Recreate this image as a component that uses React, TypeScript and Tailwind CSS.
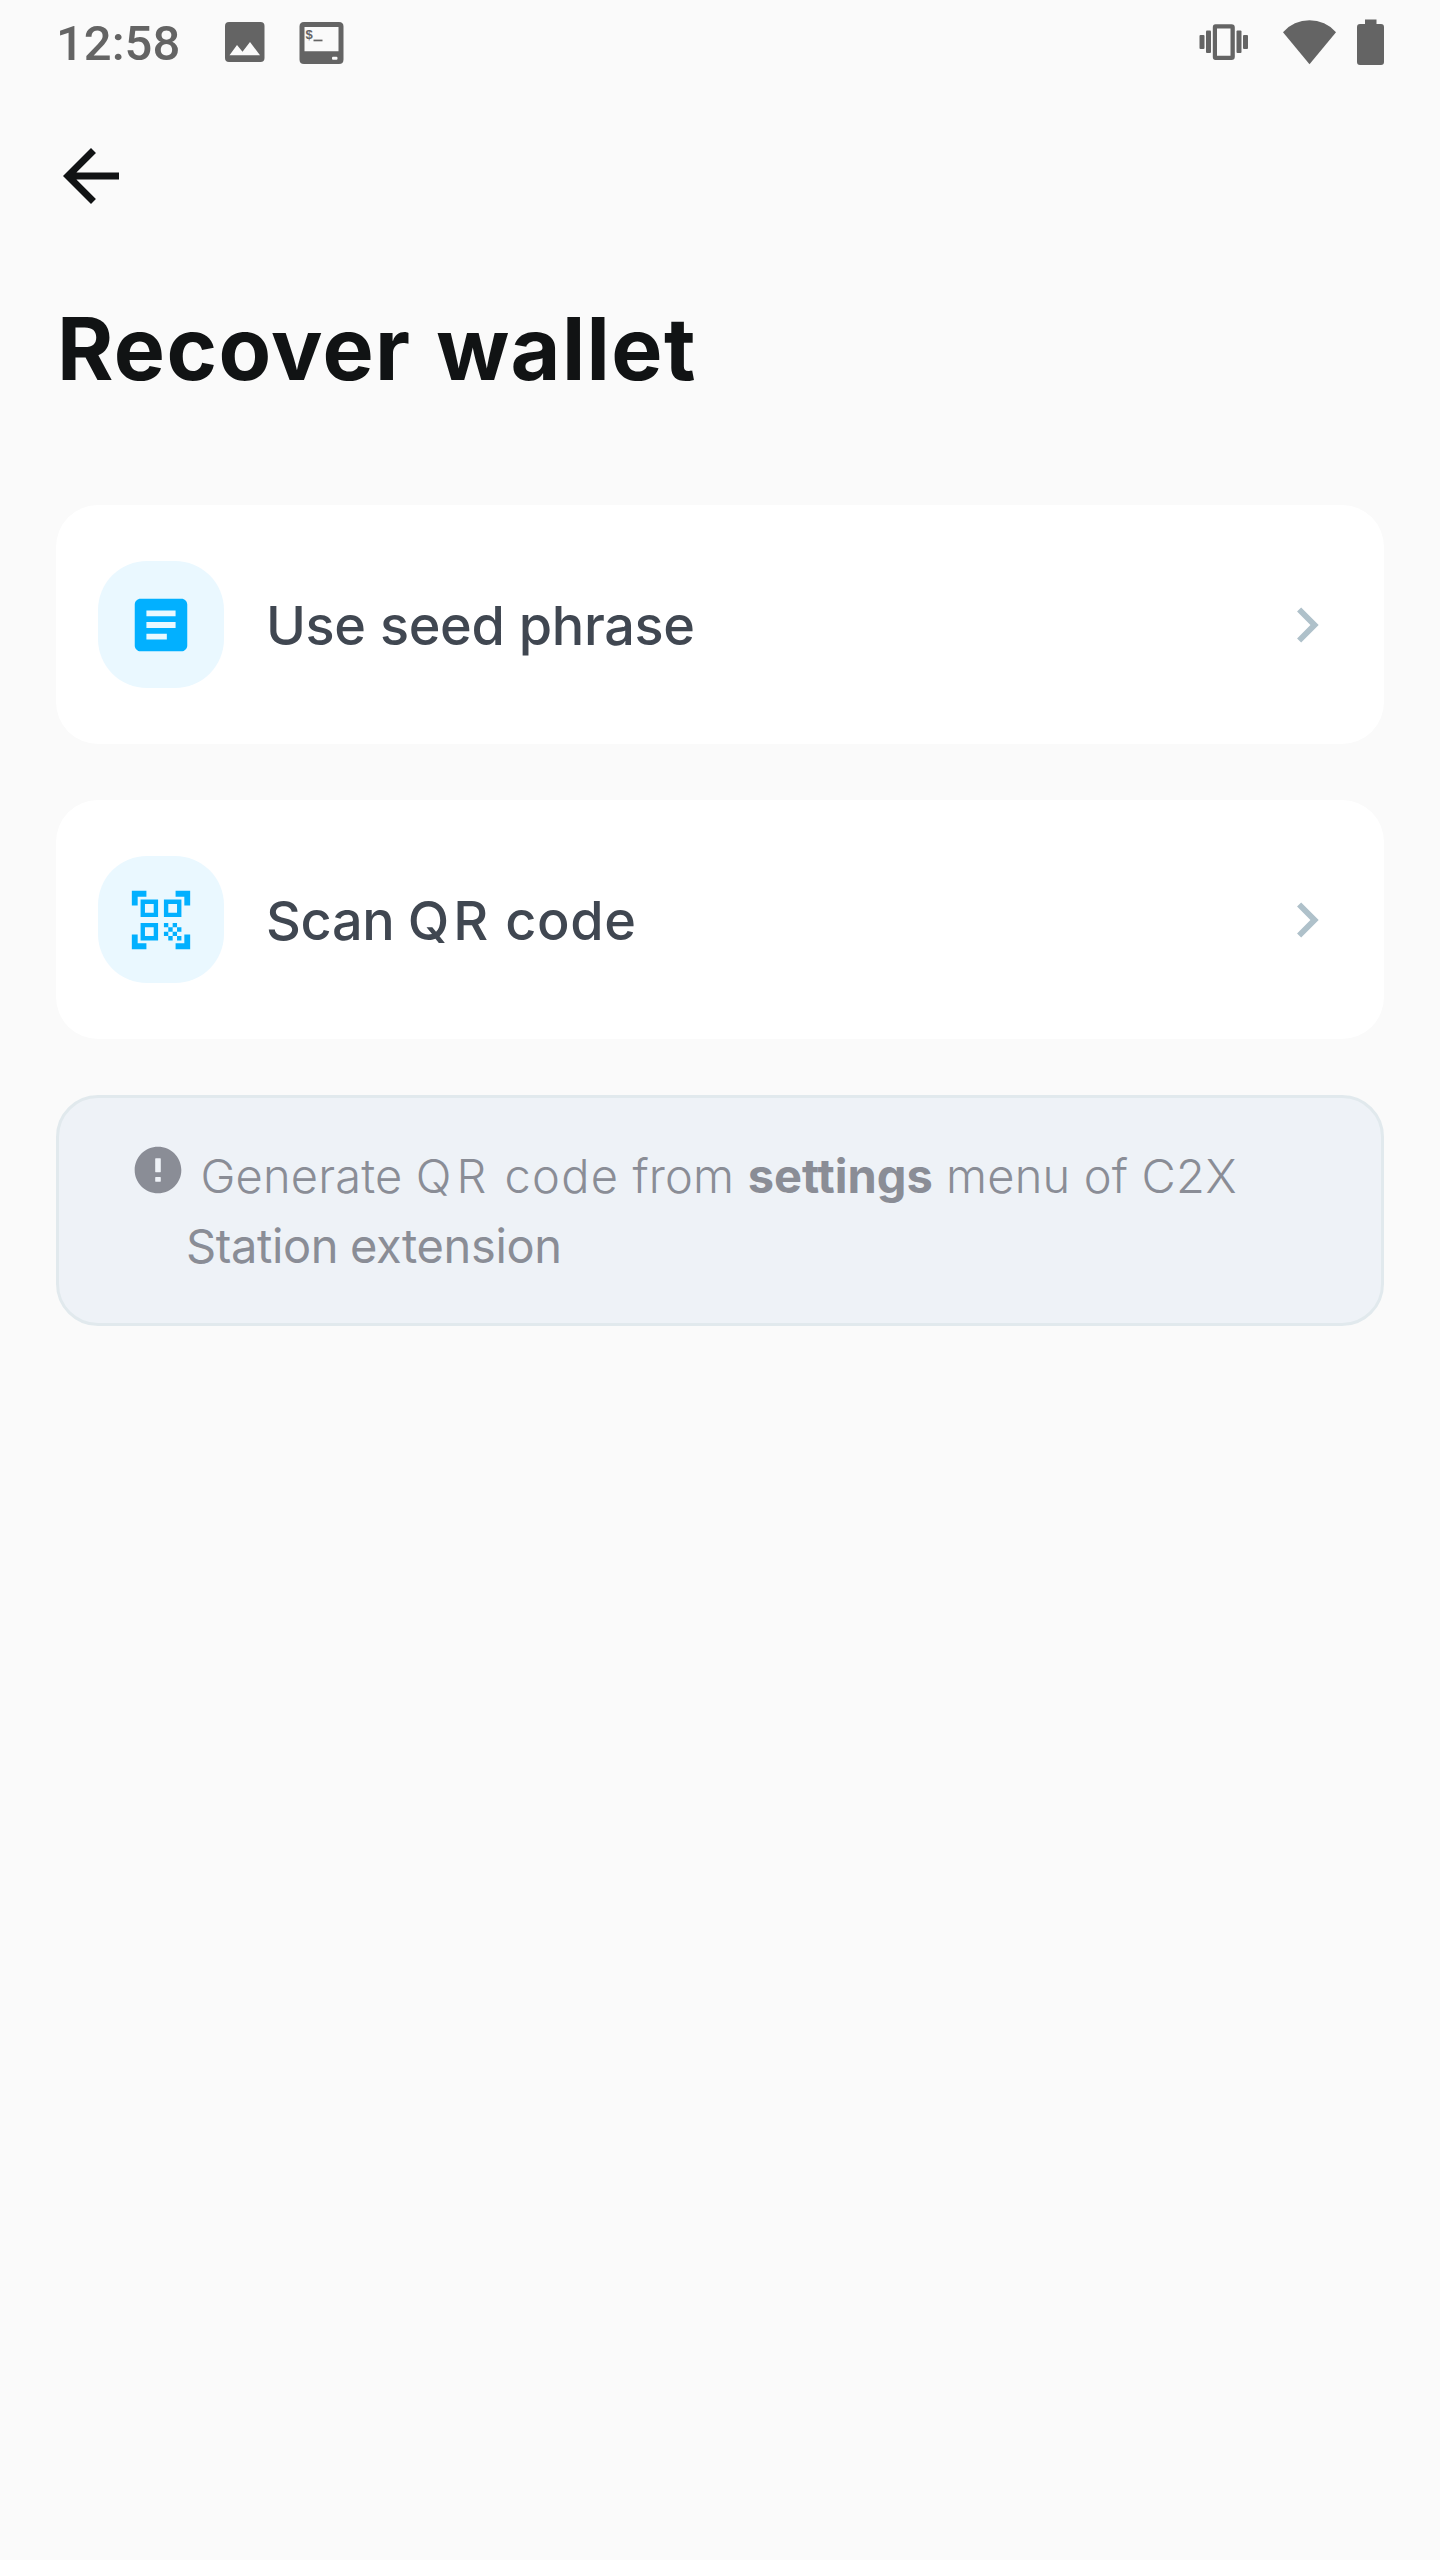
import type { ReactNode } from "react";

function StatusBar() {
  return (
    <header className="flex h-[88px] items-center justify-between px-14 text-[#646464]">
      <div className="flex items-center">
        <span className="w-[169px] font-['Roboto',sans-serif] text-[49px] leading-[88px] font-medium">12:58</span>
        <svg className="-mt-1 h-10 w-10" viewBox="0 0 40 40" fill="currentColor">
          <path
            fillRule="evenodd"
            d="M4 0H35.5Q39.5 0 39.5 4V36Q39.5 40 35.5 40H4Q0 40 0 36V4Q0 0 4 0ZM4.500 33.300H35L25 20L17.500 29.700L12 23Z"
          />
        </svg>
        <svg className="-mt-[3px] ml-[34px] h-[42px] w-[45px]" viewBox="0 0 45 42">
          <path
            fill="currentColor"
            fillRule="evenodd"
            d="M5 0H40Q44.500 0 44.500 4.500V37.500Q44.500 42 40 42H5Q0.500 42 0.500 37.500V4.500Q0.500 0 5 0ZM5.500 5V29.300H39.500V5ZM34 34.800Q33 34.800 33 36V36.600Q33 37.800 34 37.800H37.500Q38.500 37.800 38.500 36.600V36Q38.500 34.800 37.500 34.800Z"
          />
          <text x="6.300" y="16.500" fill="currentColor" className="font-['Liberation_Mono',monospace] text-[13px] font-bold">
            $
          </text>
          <rect x="14.500" y="17.600" width="9" height="1.700" fill="currentColor" />
        </svg>
      </div>
      <div className="-mt-1 flex items-center">
        <svg className="h-9 w-[50px]" viewBox="0 0 50 36" fill="currentColor">
          <rect x="0.500" y="11" width="5" height="14" rx="1" />
          <rect x="7" y="6.500" width="5" height="22.500" rx="1" />
          <path
            fillRule="evenodd"
            d="M16.500 0.300H32.500Q35.800 0.300 35.800 3.500V32.700Q35.800 35.900 32.500 35.900H16.500Q13.800 35.900 13.800 32.700V3.500Q13.800 0.300 16.500 0.300ZM18 4.500V31.800H31.500V4.500Z"
          />
          <rect x="37.500" y="6.500" width="5" height="22.500" rx="1" />
          <rect x="44" y="11" width="5" height="14" rx="1" />
        </svg>
        <svg className="ml-[34px] h-[46px] w-[53px]" viewBox="0 0 53 46" fill="currentColor">
          <path d="M0 13.200A35.300 35.300 0 0 1 53 13.200L26.500 45.200Z" />
        </svg>
        <svg className="ml-[21px] h-[46px] w-[27px]" viewBox="0 0 27 46" fill="currentColor">
          <path d="M8 0.500H19.500V5H24Q27 5 27 8V43Q27 46 24 46H3Q0 46 0 43V8Q0 5 3 5H8Z" />
        </svg>
      </div>
    </header>
  );
}

function ArticleIcon() {
  return (
    <svg className="size-[70px]" viewBox="0 0 24 24" fill="currentColor">
      <path d="M19 3H5c-1.100 0-2 .9-2 2v14c0 1.100.9 2 2 2h14c1.100 0 2-.9 2-2V5c0-1.100-.9-2-2-2zm-5 14H7v-2h7v2zm3-4H7v-2h10v2zm0-4H7V7h10v2z" />
    </svg>
  );
}

function QrScanIcon() {
  return (
    <svg className="size-[70px]" viewBox="0 0 24 24" fill="currentColor">
      <path d="M9.500 6.500v3h-3v-3h3M11 5H5v6h6V5zm-1.500 9.500v3h-3v-3h3M11 13H5v6h6v-6zm6.500-6.500v3h-3v-3h3M19 5h-6v6h6V5zm-6 8h1.500v1.500H13V13zm1.500 1.500H16V16h-1.500v-1.500zM16 13h1.500v1.500H16V13zm-3 3h1.500v1.500H13V16zm1.500 1.500H16V19h-1.500v-1.500zM16 16h1.500v1.500H16V16zm1.500-1.500H19V16h-1.500v-1.500zm0 3H19V19h-1.500v-1.500zM22 7h-2V4h-3V2h5v5zm0 15v-5h-2v3h-3v2h5zM2 22h5v-2H4v-3H2v5zM2 2v5h2V4h3V2H2z" />
    </svg>
  );
}

function OptionCard({ icon, children }: { icon: ReactNode; children: ReactNode }) {
  return (
    <button className="flex h-[239px] w-full items-start rounded-[42px] bg-white px-[42px] pt-14 text-left">
      <span className="flex h-[127px] w-[126px] shrink-0 items-center justify-center rounded-[49px] bg-[#eaf8ff] text-[#02b0ff]">
        {icon}
      </span>
      <span className="mt-[30px] ml-[42px] grow text-[54px] leading-[70px] font-medium text-[#404751]">{children}</span>
      <svg className="mt-[29px] size-[70px] shrink-0 text-[#afc1ca]" viewBox="0 0 24 24" fill="currentColor">
        <path d="M10 6L8.590 7.410 13.170 12l-4.580 4.590L10 18l6-6z" />
      </svg>
    </button>
  );
}

export default function App() {
  return (
    <div className="flex h-[2560px] w-[1440px] flex-col bg-[#fafafa] font-['Inter',sans-serif]">
      <StatusBar />
      <nav className="flex h-44 items-center pl-[49px]">
        <button aria-label="Back">
          <svg className="size-[84px] text-[#111314]" viewBox="0 0 24 24" fill="currentColor">
            <path d="M20 11H7.830l5.590-5.590L12 4l-8 8 8 8 1.410-1.410L7.830 13H20v-2z" />
          </svg>
        </button>
      </nav>
      <h1 className="mt-9 ml-[57px] text-[86px] leading-[98px] font-bold tracking-[1.4px] text-[#111314] [word-spacing:3px]">
        Recover wallet
      </h1>
      <main className="mt-[107px] flex flex-col px-14">
        <div className="flex flex-col gap-14">
          <OptionCard icon={<ArticleIcon />}>
            <span className="tracking-[-0.4px] [word-spacing:0.5px]">Use seed phrase</span>
          </OptionCard>
          <OptionCard icon={<QrScanIcon />}>
            <span className="tracking-[-0.3px] [word-spacing:-1px]">
              Scan <span className="tracking-[4px]">QR</span> <span className="tracking-[0.6px]">code</span>
            </span>
          </OptionCard>
        </div>
        <section className="mt-14 flex h-[231px] rounded-[42px] border-[3px] border-[#e1e9ed] bg-[#eef2f7] pt-[43px] pl-[71px] text-[#8a8d96]">
          <svg className="mt-[1px] size-14 shrink-0" viewBox="0 0 24 24" fill="currentColor">
            <path
              fillRule="evenodd"
              d="M12 2C6.480 2 2 6.480 2 12s4.480 10 10 10 10-4.480 10-10S17.520 2 12 2zM10.800 7.200Q10.800 7 11 7H13Q13.200 7 13.200 7.200V12.800Q13.200 13 13 13H11Q10.800 13 10.800 12.800zM10.800 15.200Q10.800 15 11 15H13Q13.200 15 13.200 15.200V16.800Q13.200 17 13 17H11Q10.800 17 10.800 16.800z"
            />
          </svg>
          <p className="indent-[14.5px] text-[47px] leading-[70px] font-light tracking-[0.15px] whitespace-nowrap">
            Generate <span className="tracking-[5px]">QR</span> <span className="tracking-[1.2px]">code</span> from{" "}
            <strong className="font-bold tracking-normal">settings</strong> menu of{" "}
            <span className="font-[350] tracking-[0.5px]">C2X</span>
            <br />
            <span className="font-normal tracking-[-0.4px] [word-spacing:-0.9px]">Station extension</span>
          </p>
        </section>
      </main>
    </div>
  );
}
